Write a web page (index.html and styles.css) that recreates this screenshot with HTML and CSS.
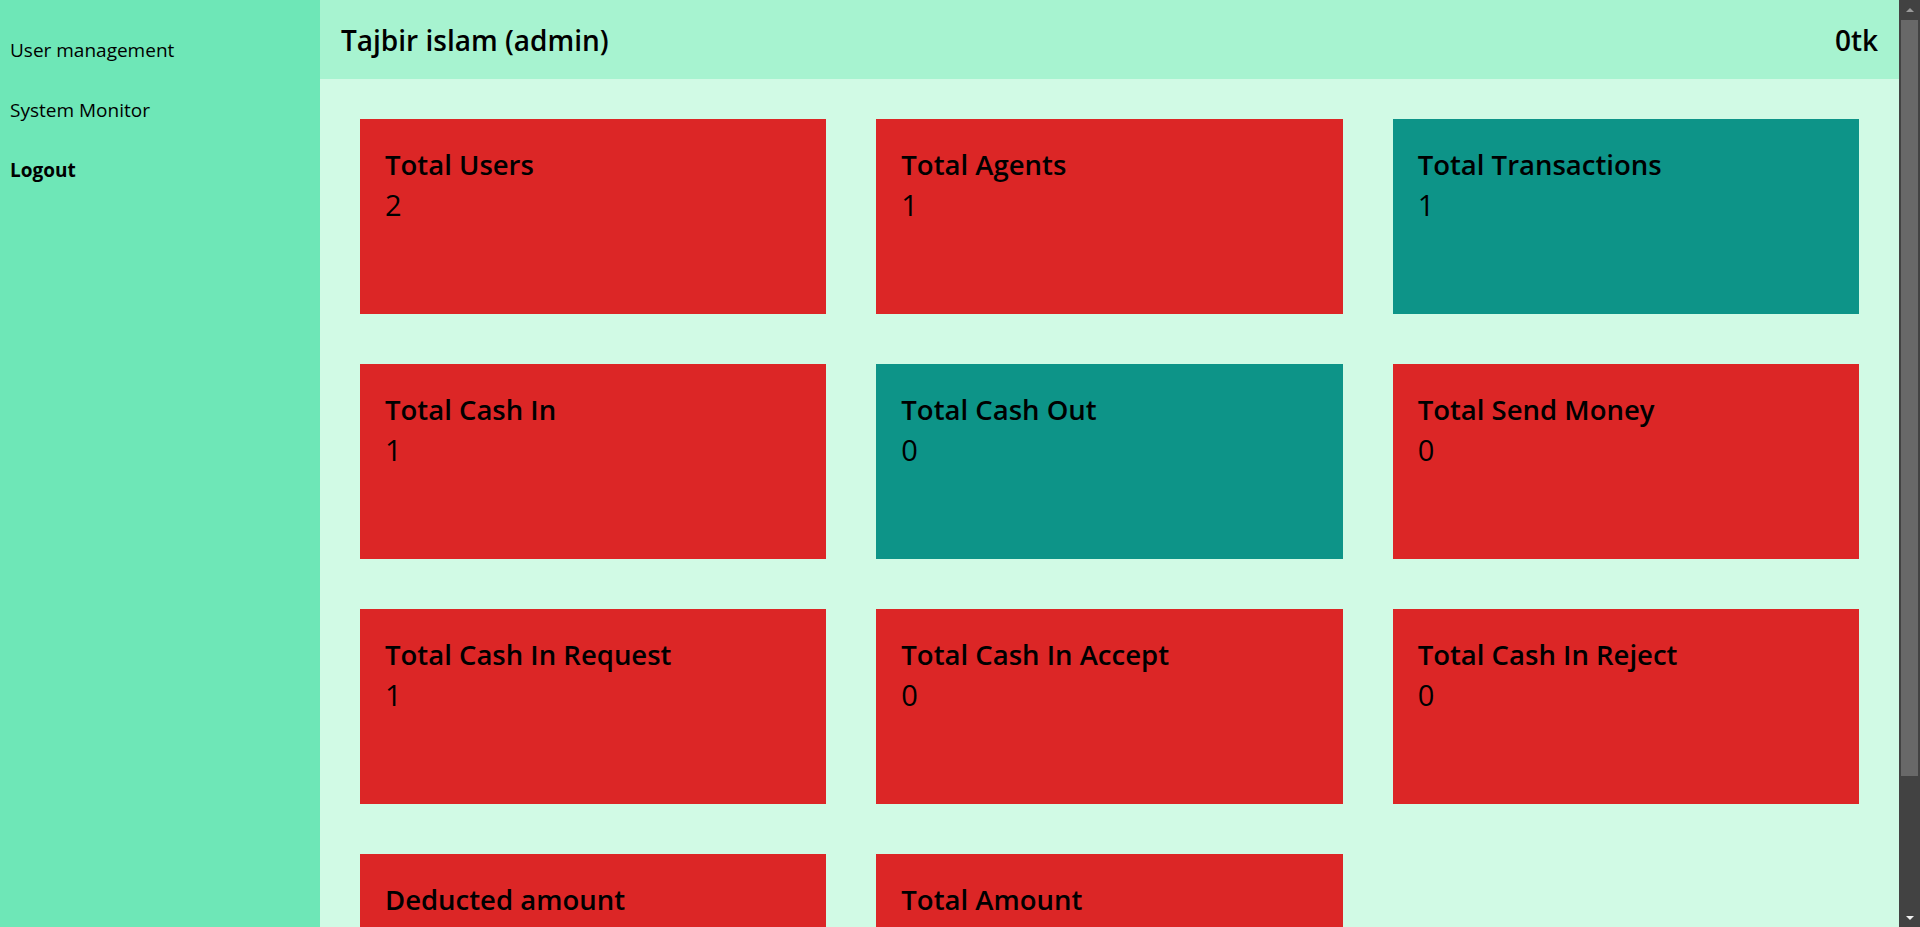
FILE: index.html
```html
<!DOCTYPE html>
<html lang="en">
<head>
<meta charset="utf-8">
<title>Admin Dashboard</title>
<link rel="stylesheet" href="styles.css">
</head>
<body>
<div class="layout">
  <aside class="sidebar">
    <nav class="nav">
      <a class="nav-item" href="#">User management</a>
      <a class="nav-item" href="#">System Monitor</a>
      <a class="nav-item nav-logout" href="#">Logout</a>
    </nav>
  </aside>
  <main class="main">
    <header class="topbar">
      <span class="user-name">Tajbir islam (admin)</span>
      <span class="balance">0tk</span>
    </header>
    <section class="stats">
      <div class="card red"><div class="card-title">Total Users</div><div class="card-value">2</div></div>
      <div class="card red"><div class="card-title">Total Agents</div><div class="card-value">1</div></div>
      <div class="card teal"><div class="card-title">Total Transactions</div><div class="card-value">1</div></div>
      <div class="card red"><div class="card-title">Total Cash In</div><div class="card-value">1</div></div>
      <div class="card teal"><div class="card-title">Total Cash Out</div><div class="card-value">0</div></div>
      <div class="card red"><div class="card-title">Total Send Money</div><div class="card-value">0</div></div>
      <div class="card red"><div class="card-title">Total Cash In Request</div><div class="card-value">1</div></div>
      <div class="card red"><div class="card-title">Total Cash In Accept</div><div class="card-value">0</div></div>
      <div class="card red"><div class="card-title">Total Cash In Reject</div><div class="card-value">0</div></div>
      <div class="card red"><div class="card-title">Deducted amount</div><div class="card-value">0</div></div>
      <div class="card red"><div class="card-title">Total Amount</div><div class="card-value">0</div></div>
    </section>
  </main>
</div>
<div class="scrollbar" aria-hidden="true">
  <div class="sb-arrow sb-up"></div>
  <div class="sb-track"><div class="sb-thumb"></div></div>
  <div class="sb-arrow sb-down"></div>
</div>
</body>
</html>
```

FILE: styles.css
```css
html, body {
  margin: 0;
  padding: 0;
}

body {
  font-family: "Open Sans", "Noto Sans", "DejaVu Sans", sans-serif;
  color: #000;
  background: #d1fae5;
  padding-right: 21px;
}

.layout {
  display: flex;
  min-height: 100vh;
}

.sidebar {
  width: 320px;
  flex: 0 0 320px;
  background: #6ee7b7;
}

.nav {
  display: flex;
  flex-direction: column;
  padding-top: 20px;
}

.nav-item {
  display: block;
  padding: 15px 10px;
  font-size: 19px;
  line-height: 30px;
  font-weight: 500;
  color: #000;
  text-decoration: none;
}

.nav-logout {
  font-weight: 700;
}

.main {
  flex: 1;
  min-width: 0;
  background: #d1fae5;
}

.topbar {
  height: 79px;
  display: flex;
  align-items: center;
  justify-content: space-between;
  padding: 0 21px 0 21px;
  background: #a7f3d0;
  font-size: 28px;
  font-weight: 600;
}

.stats {
  display: grid;
  grid-template-columns: repeat(3, 1fr);
  gap: 50px;
  padding: 40px;
}

.card {
  height: 195px;
  box-sizing: border-box;
  padding: 26px 25px 25px;
}

.red {
  background: #dc2626;
}

.teal {
  background: #0d9488;
}

.card-title {
  font-size: 27.5px;
  line-height: 40px;
  font-weight: 600;
}

.card-value {
  font-size: 29px;
  line-height: 40px;
  font-weight: 400;
}

/* fake window scrollbar overlaying the right edge */
.scrollbar {
  position: fixed;
  top: 0;
  right: 0;
  width: 21px;
  height: 100vh;
  background: #424242;
  display: flex;
  flex-direction: column;
  align-items: center;
}

.sb-arrow {
  flex: 0 0 19px;
  width: 21px;
  display: flex;
  align-items: center;
  justify-content: center;
}

.sb-up::before,
.sb-down::before {
  content: "";
  width: 0;
  height: 0;
  border-left: 4px solid transparent;
  border-right: 4px solid transparent;
}

.sb-up::before {
  border-bottom: 4px solid #9a9a9a;
}

.sb-down::before {
  border-top: 4px solid #f0f0f0;
}

.sb-track {
  flex: 1;
  width: 17px;
  padding-top: 1px;
}

.sb-thumb {
  height: 756px;
  width: 17px;
  background: #686868;
}
```
